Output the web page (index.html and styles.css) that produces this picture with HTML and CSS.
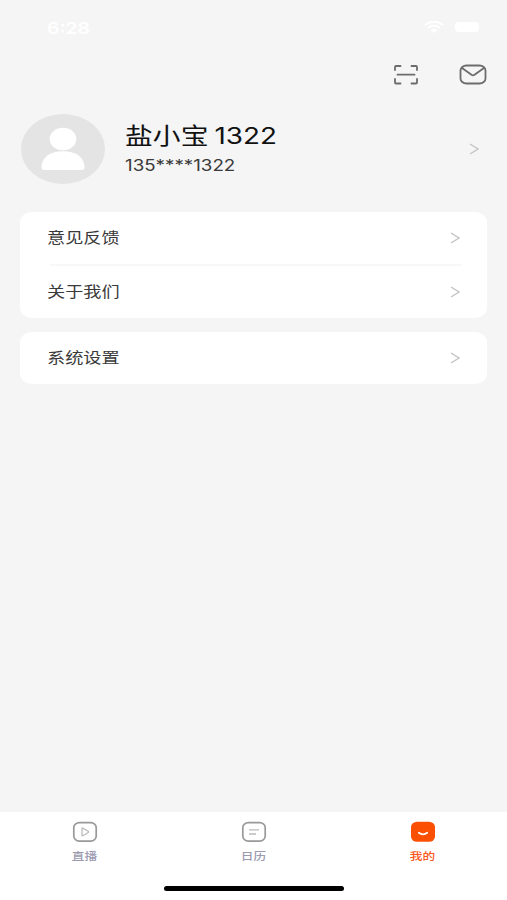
FILE: index.html
```html
<!DOCTYPE html>
<html lang="zh-CN">
<head>
    <meta charset="UTF-8">
    <meta name="viewport" content="width=device-width, initial-scale=1.0">
    <title>我的</title>
    <link rel="stylesheet" href="styles.css">
</head>
<body>
    <div class="status">
        <span class="time wide">6:28</span>
        <svg class="wifi" width="20" height="12" viewBox="0 0 20 12">
            <path d="M1 4Q10-3 19 4M4 7Q10 2.500 16 7" fill="none" stroke="#fff" stroke-width="2"/>
            <path d="M6.500 9Q10 6.500 13.500 9L10 12z" fill="#fff"/>
        </svg>
        <span class="battery"></span>
    </div>
    <div class="tools">
        <svg width="26" height="22" viewBox="0 0 26 22">
            <path d="M2 6V3Q2 2 3 2H7.500M18.500 2H23Q24 2 24 3V6M24 15V18.500Q24 19.500 23 19.500H18.500M7.500 19.500H3Q2 19.500 2 18.500V15M4.500 10.700H21.500"/>
        </svg>
        <svg width="28" height="22" viewBox="0 0 28 22">
            <rect x="1.500" y="1.500" width="25" height="18" rx="6" ry="5"/>
            <path d="M3 4L12.500 10.800Q14 11.800 15.500 10.800L25 4"/>
        </svg>
    </div>
    <div class="profile">
        <svg class="avatar" width="84" height="70" viewBox="0 0 84 70">
            <ellipse cx="42" cy="35" rx="42" ry="35" fill="#e4e4e4"/>
            <ellipse cx="42" cy="25" rx="13.300" ry="11.300" fill="#fff"/>
            <path d="M20.500 53.500C20.500 44 28 37.300 42 37.300S63.500 44 63.500 53.500Q63.500 56 60.500 56H23.500Q20.500 56 20.500 53.500Z" fill="#fff"/>
        </svg>
        <div class="user">
            <div class="name wide">盐小宝<span class="num">1322</span></div>
            <div class="phone wide">135****1322</div>
        </div>
        <svg class="arrow" width="10" height="12" viewBox="0 0 10 12"><path d="M1 1L9 6L1 11"/></svg>
    </div>
    <div class="card">
        <div class="row">
            <span class="wide">意见反馈</span>
            <svg class="arrow" width="10" height="12" viewBox="0 0 10 12"><path d="M1 1L9 6L1 11"/></svg>
        </div>
        <div class="line"></div>
        <div class="row">
            <span class="wide">关于我们</span>
            <svg class="arrow" width="10" height="12" viewBox="0 0 10 12"><path d="M1 1L9 6L1 11"/></svg>
        </div>
    </div>
    <div class="card">
        <div class="row">
            <span class="wide">系统设置</span>
            <svg class="arrow" width="10" height="12" viewBox="0 0 10 12"><path d="M1 1L9 6L1 11"/></svg>
        </div>
    </div>
    <div class="tabbar">
        <div class="tabs">
            <div class="tab">
                <svg width="26" height="22" viewBox="0 0 26 22">
                    <rect class="frame" x="1.800" y="1.700" width="22.400" height="18.400" rx="5.500" ry="4.800"/>
                    <path class="mark" d="M10 7.500Q10 6.800 10.800 7.100L16.200 10.300Q17 10.900 16.200 11.500L10.800 14.700Q10 15 10 14.300Z"/>
                </svg>
                <span>直播</span>
            </div>
            <div class="tab">
                <svg width="26" height="22" viewBox="0 0 26 22">
                    <rect class="frame" x="1.800" y="1.700" width="22.400" height="18.400" rx="5.500" ry="4.800"/>
                    <path class="mark" d="M8 8.800H18M8 13H15"/>
                </svg>
                <span>日历</span>
            </div>
            <div class="tab active">
                <svg width="26" height="22" viewBox="0 0 26 22">
                    <rect x="1" y="0.800" width="24" height="20" rx="6" ry="5.200" fill="#fb5004"/>
                    <path d="M8.800 11.700Q13 14.900 17.200 11.700" fill="none" stroke="#fff" stroke-width="1.800" stroke-linecap="round"/>
                </svg>
                <span>我的</span>
            </div>
        </div>
        <div class="home"></div>
    </div>
</body>
</html>
```
FILE: styles.css
```css
* {
    box-sizing: border-box;
}
body {
    display: flex;
    flex-direction: column;
    height: 900px;
    margin: 0;
    background: #f5f5f5;
    color: #3a3a3a;
    font-family: Inter, "Noto Sans CJK SC", sans-serif;
    overflow: hidden;
}
svg {
    display: block;
    flex: none;
}
/* lettering is wider than it is tall */
.wide {
    width: fit-content;
    transform: scaleX(1.21);
    transform-origin: left center;
    white-space: nowrap;
}
.status {
    display: flex;
    align-items: center;
    height: 54px;
    padding: 0 28px 0 47px;
    color: #fff;
}
.time {
    margin-right: auto;
    padding-top: 2px;
    font-size: 16px;
    font-weight: 600;
}
.wifi {
    margin-right: 11px;
}
.battery {
    width: 24px;
    height: 10px;
    border-radius: 4px;
    background: #fff;
}
.tools {
    display: flex;
    justify-content: flex-end;
    gap: 40px;
    height: 60px;
    padding: 10px 20px 0 0;
    fill: none;
    stroke: #6c6c6c;
    stroke-width: 1.8;
    stroke-linecap: round;
    stroke-linejoin: round;
}
.profile {
    display: flex;
    align-items: center;
    height: 69px;
    margin-bottom: 29px;
    padding: 0 28px 0 21px;
}
.user {
    flex: 1;
    padding: 1px 0 0 20px;
}
.name {
    color: #111;
    font-size: 23px;
    line-height: 33px;
}
.num {
    margin-left: 5px;
}
.phone {
    font-size: 15.5px;
    line-height: 26px;
}
.arrow {
    fill: none;
    stroke: #c4c4c4;
    stroke-width: 1.4;
}
.card {
    margin: 0 20px 14px;
    border-radius: 12px / 10px;
    background: #fff;
}
.row {
    display: flex;
    align-items: center;
    justify-content: space-between;
    height: 52px;
    padding: 0 27px;
    font-size: 15px;
}
.row .wide {
    padding-bottom: 3px;
}
.line {
    height: 2px;
    margin: 0 26px 0 30px;
    background: #f8f8f8;
}
.tabbar {
    height: 88px;
    margin-top: auto;
    background: #fff;
}
.tabs {
    display: flex;
    height: 74px;
    padding-top: 9px;
}
.tab {
    display: flex;
    flex: 1;
    flex-direction: column;
    align-items: center;
    color: #9c9ab0;
    font-size: 10.5px;
    font-weight: 500;
}
.tab span {
    margin-top: 5px;
    line-height: 18px;
    transform: scaleX(1.21);
}
.frame {
    fill: none;
    stroke: #999;
    stroke-width: 1.7;
}
.mark {
    fill: none;
    stroke: #bbb;
    stroke-width: 1.3;
}
.tab.active {
    color: #fb5a1c;
}
.home {
    width: 180px;
    height: 5px;
    margin: 0 auto;
    border-radius: 3px;
    background: #000;
}
```
